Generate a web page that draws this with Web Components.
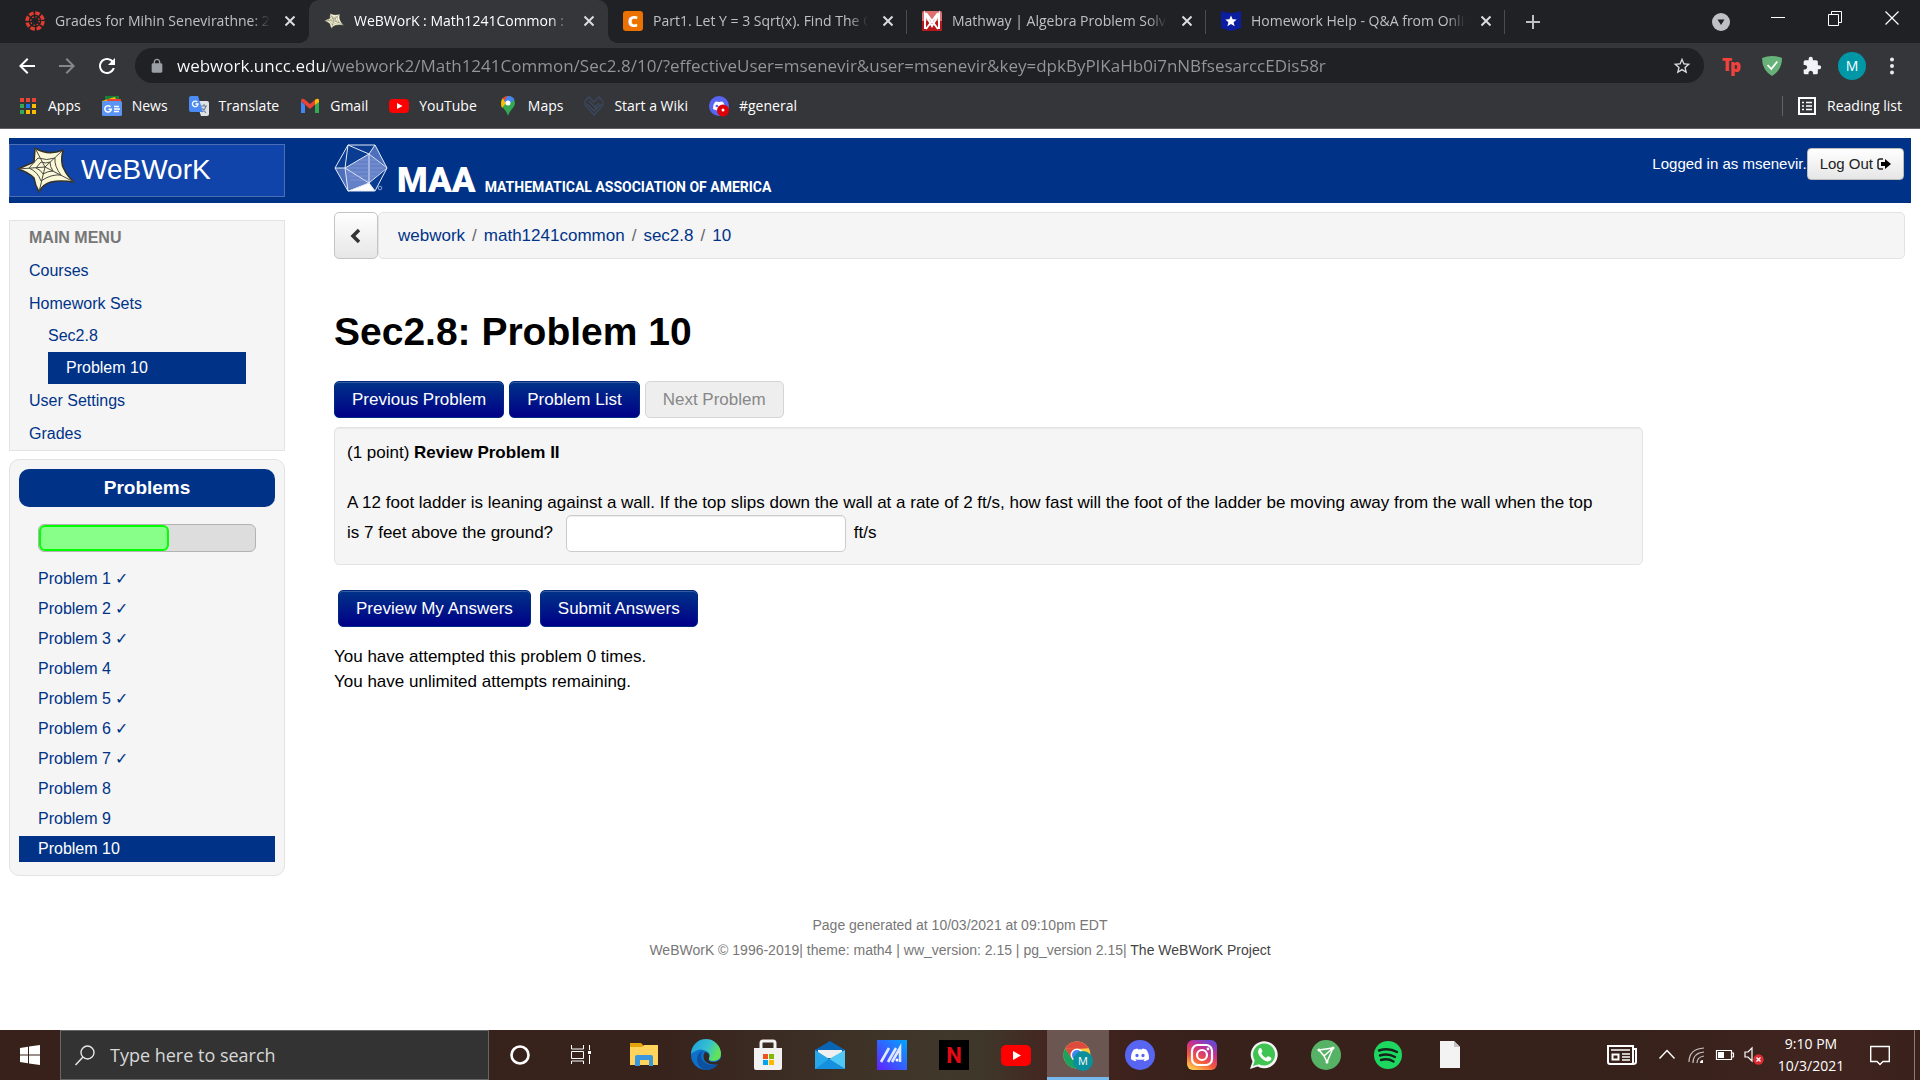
<!DOCTYPE html>
<html lang="en">
<head>
<meta charset="utf-8">
<title>WeBWorK : Math1241Common : Sec2.8 : 10</title>
<style>
    html, body { height: 100%; margin: 0; }
    body {
        --ui-font: "Open Sans", "Noto Sans", sans-serif;
        --blue: #003388;
        --well: #f5f5f5;
        --well-border: #e3e3e3;
        font-family: "Liberation Sans", Arial, sans-serif;
        font-size: 17px;
        line-height: 25px;
        color: #000;
        background: #fff;
    }
</style>
</head>
<body>
<desktop-screen>
    <browser-tabs slot="browser">
        <browser-tab icon="canvas">Grades for Mihin Senevirathne: 2021</browser-tab>
        <browser-tab icon="web" active>WeBWorK : Math1241Common : Sec2.8</browser-tab>
        <browser-tab icon="chegg">Part1. Let Y = 3 Sqrt(x). Find The Change</browser-tab>
        <browser-tab icon="mathway">Mathway | Algebra Problem Solver</browser-tab>
        <browser-tab icon="coursehero">Homework Help - Q&amp;A from Online</browser-tab>
    </browser-tabs>
    <browser-toolbar slot="browser"></browser-toolbar>
    <bookmark-bar slot="browser">
        <bookmark-link icon="apps">Apps</bookmark-link>
        <bookmark-link icon="news">News</bookmark-link>
        <bookmark-link icon="translate">Translate</bookmark-link>
        <bookmark-link icon="gmail">Gmail</bookmark-link>
        <bookmark-link icon="youtube">YouTube</bookmark-link>
        <bookmark-link icon="maps">Maps</bookmark-link>
        <bookmark-link icon="wiki">Start a Wiki</bookmark-link>
        <bookmark-link icon="discordbadge">#general</bookmark-link>
        <bookmark-link slot="end" icon="reading">Reading list</bookmark-link>
    </bookmark-bar>

    <ww-page>
        <ww-masthead slot="masthead" user="msenevir"></ww-masthead>
        <site-menu slot="side"></site-menu>
        <problem-list slot="side" count="10" current="10" solved="1,2,3,5,6,7" progress="60"></problem-list>
        <bread-crumbs path="webwork,math1241common,sec2.8,10"></bread-crumbs>
        <problem-view heading="Sec2.8: Problem 10">
            <span slot="title">(1 point) <b>Review Problem II</b></span>
            <span slot="question">A 12 foot ladder is leaning against a wall. If the top slips down the wall at a rate of 2 ft/s, how fast will the foot of the ladder be moving away from the wall when the top<br>is 7 feet above the ground?</span>
            <span slot="unit">ft/s</span>
        </problem-view>
        <ww-footer slot="footer"></ww-footer>
    </ww-page>

    <task-bar slot="taskbar"></task-bar>
</desktop-screen>

<script>
const icons = {
    // tab favicons
    canvas: ["0 0 20 20", `<g fill="none" stroke="#e23b30"><circle cx="10" cy="10" r="8" stroke-width="3.4" stroke-dasharray="4.6 1.68"/><circle cx="10" cy="10" r="4.2" stroke-width="1.4" stroke-dasharray="1.4 1.9"/></g>`],
    web: ["0 0 56 46", `<path d="M0 22 16 15 17 1Q30 9 45 3 42 16 46 22 49 29 56 35 42 33 33 35 25 37 21 45 17 38 16 31 10 25 0 22Z" fill="#fbf8d8" stroke="#33332c" stroke-width="1.6" stroke-linejoin="round"/><g fill="none" stroke="#4a4a42" stroke-width="1"><path d="M27 20 0 22M27 20 17 1M27 20 45 3M27 20 56 35M27 20 21 45"/><path d="M11 21 20 11Q29 14 37 11 36 19 43 28 33 27 23 34 20 25 11 21Z"/><path d="M18 21 23 15Q28 17 32 15 32 20 35 24 30 24 25 27 23 23 18 21Z"/></g>`],
    chegg: ["0 0 20 20", `<rect width="20" height="20" rx="3" fill="#eb7100"/><text x="10" y="16" text-anchor="middle" font-family="Open Sans" font-weight="800" font-size="16" fill="#fff">C</text>`],
    mathway: ["0 0 20 20", `<rect width="20" height="20" rx="2" fill="#e0706e"/><path d="M0 10h20v8q0 2-2 2H2q-2 0-2-2z" fill="#b81619"/><path d="M3 18V3l7 12 7-12v15M4 18 16 2M4 2l12 16" fill="none" stroke="#fff" stroke-width="2"/>`],
    coursehero: ["0 0 20 20", `<path d="M0 0q5 2 10 2t10-2v17l-10 3-10-3z" fill="#0b1ea0"/><path d="m10 4.5 1.6 3.8 4.1.3-3.1 2.7 1 4L10 13.100l-3.600 2.200 1-4-3.100-2.700 4.100-.3z" fill="#fff"/>`],
    // browser controls
    close: ["0 0 20 20", `<path d="m5.500 5.500 9 9m0-9-9 9" stroke="currentColor" stroke-width="2" fill="none"/>`],
    plus: ["0 0 20 20", `<path d="M10 3v14M3 10h14" stroke="currentColor" stroke-width="2"/>`],
    tabsearch: ["0 0 20 20", `<circle cx="10" cy="10" r="9" fill="#bdc1c6"/><path d="m6.500 7.500h7L10 13z" fill="#202124"/>`],
    minimise: ["0 0 20 20", `<path d="M3 8.500h14" stroke="#fff"/>`],
    restore: ["0 0 20 20", `<path d="M3.500 5.500h10v11h-10zM6.500 5V2.500h10v11H14" fill="none" stroke="#fff"/>`],
    winclose: ["0 0 20 20", `<path d="m3.500 2.500 13 13m0-13-13 13" stroke="#fff" stroke-width="1.200"/>`],
    back: ["0 0 24 24", `<path fill="#fff" d="M20 11H7.830l5.590-5.590L12 4l-8 8 8 8 1.410-1.410L7.830 13H20v-2z"/>`],
    forward: ["0 0 24 24", `<path fill="#85878a" d="M12 4l-1.410 1.410L16.170 11H4v2h12.170l-5.580 5.590L12 20l8-8z"/>`],
    reload: ["0 0 24 24", `<path fill="#fff" d="M17.650 6.350C16.200 4.900 14.210 4 12 4c-4.420 0-7.990 3.580-7.990 8s3.570 8 7.990 8c3.730 0 6.840-2.550 7.730-6h-2.080c-.82 2.330-3.040 4-5.650 4-3.310 0-6-2.690-6-6s2.690-6 6-6c1.660 0 3.140.69 4.220 1.780L13 11h7V4l-2.350 2.350z"/>`],
    lock: ["0 0 24 24", `<path fill="#9aa0a6" d="M18 8h-1V6c0-2.760-2.240-5-5-5S7 3.240 7 6v2H6c-1.100 0-2 .9-2 2v10c0 1.100.9 2 2 2h12c1.100 0 2-.9 2-2V10c0-1.100-.9-2-2-2zM9 8V6c0-1.660 1.340-3 3-3s3 1.340 3 3v2H9z"/>`],
    star: ["0 0 24 24", `<path fill="#dadce0" d="M22 9.240l-7.190-.62L12 2 9.190 8.630 2 9.240l5.460 4.730L5.820 21 12 17.270 18.180 21l-1.630-7.030L22 9.240zM12 15.400l-3.760 2.270 1-4.280-3.320-2.880 4.380-.38L12 6.100l1.710 4.040 4.380.38-3.320 2.880 1 4.280L12 15.400z"/>`],
    tp: ["0 0 20 20", `<text x="0" y="15" font-family="Open Sans" font-weight="800" font-size="17" fill="#f2423c">T</text><text x="8" y="16" font-family="Open Sans" font-weight="800" font-size="17" fill="#f2423c">p</text>`],
    shield: ["0 0 20 20", `<path d="M10 0q5 0 10 2 0 12-10 18Q0 14 0 2 5 0 10 0Z" fill="#67b279"/><path d="m5.500 9 3.800 4 6-7.500" fill="none" stroke="#fff" stroke-width="1.800"/>`],
    extension: ["0 0 24 24", `<path fill="#f1f3f4" d="M20.500 11H19V7c0-1.100-.9-2-2-2h-4V3.500C13 2.120 11.880 1 10.500 1S8 2.120 8 3.500V5H4c-1.100 0-1.990.9-1.990 2v3.800H3.500c1.490 0 2.700 1.210 2.700 2.700s-1.210 2.700-2.700 2.700H2V20c0 1.100.9 2 2 2h3.800v-1.500c0-1.490 1.210-2.700 2.700-2.700 1.490 0 2.700 1.210 2.700 2.700V22H17c1.100 0 2-.9 2-2v-4h1.500c1.380 0 2.500-1.120 2.500-2.500S21.880 11 20.500 11z"/>`],
    dots: ["0 0 20 20", `<g fill="#e8eaed"><circle cx="10" cy="3.500" r="2"/><circle cx="10" cy="10" r="2"/><circle cx="10" cy="16.500" r="2"/></g>`],
    // bookmarks
    apps: ["0 0 20 20", `<path fill="#ea4335" d="M2 2h4v4H2zM8 2h4v4H8zM14 2h4v4h-4z"/><path fill="#34a853" d="M2 8h4v4H2zM2 14h4v4H2z"/><path fill="#1a73e8" d="M8 8h4v4H8z"/><path fill="#fbbc04" d="M14 8h4v4h-4zM8 14h4v4H8zM14 14h4v4h-4z"/>`],
    news: ["0 0 20 20", `<path d="M3 0h14v8H3z" fill="#188038"/><path d="m0 5 13-4 3 8H1z" fill="#fbbc04"/><path d="m5 3 14 0v6H5z" fill="#ea4335"/><rect y="5" width="20" height="15" rx="1.500" fill="#5b94f3"/><path d="M8.500 10.800A3.200 3.200 0 1 0 9.200 13.300H6.500M12 10.500h5M12 13h6M12 15.500h5" fill="none" stroke="#fff" stroke-width="1.500"/>`],
    translate: ["0 0 20 20", `<path d="M7 5h11q2 0 2 2v11q0 2-2 2h-6z" fill="#dfe3e8"/><path d="M12 10h6M15 8v2M17 10q-1 4-4 6M13 12l4 5" stroke="#6f7f8c" stroke-width="1.100" fill="none"/><path d="M2 0h7l5 16H2q-2 0-2-2V2Q0 0 2 0Z" fill="#4c8bf5"/><path d="M8.300 6A2.800 2.800 0 1 0 9 8H6.500" fill="none" stroke="#fff" stroke-width="1.300"/>`],
    gmail: ["0 0 20 20", `<path d="M1 5v12h4V9z" fill="#4285f4"/><path d="M19 5v12h-4V9z" fill="#34a853"/><path d="M1 5q0-3 3-2l6 5 6-5q3-1 3 2l-9 8z" fill="#ea4335"/><path d="M15 9V4q4-3 4 1v1z" fill="#fbbc04"/>`],
    youtube: ["0 0 20 20", `<rect y="3" width="20" height="14" rx="4" fill="#f00"/><path d="m8 7 5.500 3L8 13z" fill="#fff"/>`],
    maps: ["0 0 20 20", `<path d="M10 0a7 7 0 0 0-7 7q0 3 3 6 3 3 4 7 1-4 4-7 3-3 3-6a7 7 0 0 0-7-7" fill="#34a853"/><path d="M3 7a7 7 0 0 1 2-5l4 4-5 6Q3 10 3 7" fill="#fbbc04"/><path d="M4.500 2.500A7 7 0 0 1 10 0l-1 7z" fill="#ea4335"/><path d="M10 0q5 0 6.500 4L10 8 6 5z" fill="#4285f4"/><circle cx="10" cy="7" r="2.500" fill="#fff"/>`],
    wiki: ["0 0 20 20", `<path d="M10 19 1 9V5l4-4 5 5 5-5 4 4v4zM5 5l7 7M10 12l5-5M3 8l7 7 7-7" fill="none" stroke="#3b4860" stroke-width="1.300"/>`],
    discordbadge: ["0 0 20 20", `<circle cx="10" cy="10" r="10" fill="#5865f2"/><path d="M4 13q0-6 3-7.500 3 .8 6 0 3 1.500 3 7.500-6 3-12 0" fill="#fff"/><circle cx="7.800" cy="10" r="1.300" fill="#5865f2"/><circle cx="14" cy="14.500" r="6" fill="#dd0008"/><circle cx="14" cy="14" r="1.500" fill="#fff"/>`],
    reading: ["0 0 20 20", `<path d="M2 2h16v16H2z" fill="none" stroke="#fff" stroke-width="2"/><path d="M5 6.500h2m2 0h6M5 10h2m2 0h6M5 13.500h2m2 0h6" stroke="#fff" stroke-width="1.500"/>`],
    // page
    chevron: ["0 0 20 20", `<path d="m13 4-6 6 6 6" fill="none" stroke="#333" stroke-width="3.500"/>`],
    logout: ["0 0 14 14", `<path d="M6 2H3Q1 2 1 4v6q0 2 2 2h3" fill="none" stroke="#222" stroke-width="1.500"/><path d="M4 5h4V2l6 5-6 5V9H4z" fill="#000"/>`],
    solid: ["0 0 54 48", `<path d="m14 1 27 0 12 23-12 23H14L1 24z" fill="#0a3c91"/><path d="M11 24 35 10l17 14-17 15L14 46 1 24z" fill="#6581c8"/><path d="m35 10 6-9 12 23zM11 24 14 46 1 24z" fill="#4e6fbb"/><path d="m35 39 6 8H14z" fill="#fff"/><path d="m14 1 27 0 12 23-12 23H14L1 24zM14 1l21 9 6-9M14 1 11 24 1 24M11 24 35 10l18 14M11 24l3 23 21-8 18-15M11 24l24 15 6 8M35 10v29" fill="none" stroke="#e4eaf7" stroke-width="1"/><path d="M13 24h36M14 28h32M15 32h26M16 36h18M18 20h28M26 16h16" stroke="#8ba2da" stroke-width=".6"/><circle cx="46" cy="44" r="1.800" fill="none" stroke="#8ba2da"/>`],
    // taskbar
    windows: ["0 0 20 20", `<path fill="#fff" d="m0 3 8-1.200V9.500H0zM9 1.600 20 0v9.500H9zM0 10.500h8v7.700L0 17zM9 10.500h11V20L9 18.400z"/>`],
    search: ["0 0 20 20", `<circle cx="12.500" cy="7.500" r="6.500" fill="none" stroke="#e8e8e8" stroke-width="1.400"/><path d="m8 12-7.500 8" stroke="#e8e8e8" stroke-width="1.500"/>`],
    cortana: ["0 0 30 30", `<circle cx="15" cy="15" r="8.500" fill="none" stroke="#fff" stroke-width="2.600"/>`],
    taskview: ["0 0 30 30", `<path d="M4.500 5v4h12V5M4.500 24v-3h12v3M4.500 11.500h12v7h-12zM22.500 5v5M22.500 15v9" fill="none" stroke="#fff"/><path d="M21 11h3v3h-3z" fill="#fff"/>`],
    folder: ["0 0 30 30", `<path d="M1 3h11l2 2v3H1z" fill="#e6a30c"/><path d="M1 7h12l2-2h14v20H1z" fill="#ffd35c"/><path d="M6 26V17q0-2 2-2h14q2 0 2 2v9h-4v-6h-9v6z" fill="#3a96dd"/>`],
    edge: ["0 0 30 30", `<defs><linearGradient id="e" x2="1" y2=".4"><stop stop-color="#1b9de2"/><stop offset=".6" stop-color="#35c1d0"/><stop offset="1" stop-color="#62e35a"/></linearGradient></defs><circle cx="15" cy="15" r="15" fill="#0f70c9"/><path d="M0 14A15 15 0 0 1 30 14q0 7-8 7-5 0-4-3 2-3-1-6Q9 6 0 14" fill="url(#e)"/><path d="M27 24q-9 3-15-3-4-5 0-10-6 2-6 9 1 8 9 10 8 0 12-6" fill="#0d50a0"/><path d="M18 18q-2 4 5 4 4 0 7-4l-2 6q-9 2-14-3-3-5 0-9 5 1 4 6" fill="#352721"/>`],
    store: ["0 0 30 30", `<path d="M8 9V3q0-2 2-2h10q2 0 2 2v6" fill="none" stroke="#f2f2f2" stroke-width="3"/><path d="M1 8h28v20q0 2-2 2H3q-2 0-2-2z" fill="#f1f1f1"/><path d="M10 14h5v5h-5z" fill="#f25022"/><path d="M16 14h5v5h-5z" fill="#7fba00"/><path d="M10 20h5v5h-5z" fill="#00a4ef"/><path d="M16 20h5v5h-5z" fill="#ffb900"/>`],
    mail: ["0 0 30 30", `<path d="m15 1 15 9v8H0v-8z" fill="#0a64b4"/><path d="M3 10h24v8H3z" fill="#f0f0f0"/><path d="m0 10 30 19H0z" fill="#28a8ea"/><path d="m30 10-16 9 16 10z" fill="#50c8f5"/><path d="m0 29 14-10 16 10z" fill="#1490df"/>`],
    maker: ["0 0 30 30", `<defs><linearGradient id="m" x1="1" x2="0" y2="1"><stop stop-color="#00a6ff"/><stop offset="1" stop-color="#6420ff"/></linearGradient></defs><path d="M0 0h30v30H0z" fill="url(#m)"/><path d="m4 22 8-14M11 22l8-14M15 22l8-14v14" stroke="#dfe8ff" stroke-width="2.600" fill="none"/><circle cx="20" cy="20" r="1.500" fill="#fff"/>`],
    netflix: ["0 0 30 30", `<path d="M0 0h30v30H0z"/><text x="15" y="23" text-anchor="middle" font-family="Roboto" font-weight="700" font-size="22" fill="#e50914">N</text>`],
    youtubebig: ["0 0 30 30", `<rect y="5" width="30" height="21" rx="5" fill="#f00"/><path d="m12 11 8 4.500-8 4.500z" fill="#fff"/>`],
    chrome: ["0 0 30 30", `<circle cx="14" cy="15" r="13.500" fill="#ffcd40"/><path d="M2.300 8.200A13.500 13.500 0 0 1 25.700 8.200L14 9z" fill="#dd4b3e"/><path d="M2.300 8.200A13.500 13.500 0 0 0 14 28.500L19 19 8 17z" fill="#1aa260"/><path d="M2.300 8.200 8 18l6-9.500z" fill="#dd4b3e"/><circle cx="14" cy="15" r="6.500" fill="#fff"/><circle cx="14" cy="15" r="5" fill="#4285f4"/><circle cx="20" cy="21" r="10" fill="#0a8f9c"/><text x="20" y="25" text-anchor="middle" font-family="Open Sans" font-size="11" fill="#fff">M</text>`],
    discord: ["0 0 30 30", `<circle cx="15" cy="15" r="15" fill="#5865f2"/><path transform="translate(6 6.500) scale(.75 .7)" fill="#fff" d="M20.317 4.370a19.800 19.800 0 0 0-4.885-1.515.074.074 0 0 0-.079.037c-.211.375-.445.865-.608 1.250a18.300 18.300 0 0 0-5.487 0c-.164-.393-.406-.874-.618-1.250a.077.077 0 0 0-.079-.037A19.700 19.700 0 0 0 3.677 4.370C.533 9.046-.319 13.580.099 18.058c2.053 1.508 4.041 2.423 6.024 3.085.54-.63.95-1.295 1.310-2.022-.69-.353-1.310-.655-1.914-1.020l.45-.42c3.928 1.793 8.180 1.793 12.061 0l.45.42c-.6.340-1.220.65-1.914.998.36.720.77 1.390 1.310 2.022 1.990-.585 3.980-1.500 6.034-3.063.5-5.177-.838-9.674-3.549-13.660zM8.020 15.331c-1.183 0-2.157-1.086-2.157-2.419s.956-2.419 2.157-2.419 2.176 1.095 2.157 2.419c0 1.333-.956 2.419-2.157 2.419zm7.975 0c-1.183 0-2.157-1.086-2.157-2.419s.955-2.419 2.157-2.419 2.176 1.095 2.157 2.419c0 1.333-.946 2.419-2.157 2.419z"/>`],
    instagram: ["0 0 30 30", `<defs><linearGradient id="i" x1=".2" y1="1" x2=".7" y2="0"><stop stop-color="#ffcf50"/><stop offset=".35" stop-color="#f4573c"/><stop offset=".7" stop-color="#c52f92"/><stop offset="1" stop-color="#6a48d0"/></linearGradient></defs><rect width="30" height="30" rx="6" fill="url(#i)"/><g fill="none" stroke="#fff" stroke-width="2.200"><rect x="5" y="5" width="20" height="20" rx="6"/><circle cx="15" cy="15" r="5"/></g><circle cx="21" cy="9" r="1.400" fill="#fff"/>`],
    whatsapp: ["0 0 30 30", `<path d="m1 29 2.500-7.500A13.500 13.500 0 1 1 8.500 26.500z" fill="#f4f4f4"/><path d="m4 26 1.800-5.500A11 11 0 1 1 10 24.300z" fill="#3fc351"/><path d="M10 8.500q2-1.500 3 1.500 1 2-.8 3 1.500 3.500 4.800 5 1.500-2.500 3-1.500 3.500 1.500 2 3.500-3 3-8-.500Q7 14 10 8.500" fill="#fff"/>`],
    vpn: ["0 0 30 30", `<circle cx="15" cy="15" r="15" fill="#56b366"/><path d="m8 10 14-2-6 14-3-6zM13 16l9-8" fill="none" stroke="#fff" stroke-width="1.500"/><g fill="#fff"><circle cx="8" cy="10" r="1.500"/><circle cx="22" cy="8" r="1.500"/><circle cx="16" cy="22" r="1.500"/></g>`],
    spotify: ["0 0 30 30", `<circle cx="15" cy="15" r="14" fill="#1ed760"/><path d="M6 10.500q10-3 18 1.500M7 15.500q8-2.500 15 1.500M8 20q7-2 12.500 1.500" fill="none" stroke="#15241a" stroke-width="2.400" stroke-linecap="round"/>`],
    file: ["0 0 30 30", `<path d="M5 1h14l6 6v21H5z" fill="#f3f3f3"/><path d="M19 1v6h6z" fill="#c4c4c4"/>`],
    newspaper: ["0 0 30 30", `<path d="M1 6h25v18H3q-2 0-2-2zM26 9h3v13q0 2-3 2" fill="none" stroke="#fff" stroke-width="2"/><path d="M4 10h19M15 14h8M15 17h8M15 20h8" stroke="#fff" stroke-width="1.500"/><path d="M5.500 14.500h6v5h-6z" fill="none" stroke="#fff" stroke-width="2"/>`],
    caret: ["0 0 20 20", `<path d="m2.500 13.500 7.500-8 7.500 8" fill="none" stroke="#fff" stroke-width="1.400"/>`],
    wifi: ["0 0 20 20", `<g fill="none" stroke="#c9c2c0" stroke-width="1.200"><path d="M3 17Q3 4 18 3"/><path d="M7 18Q7 8 18 7"/><path d="M11 18q0-6 7-7"/></g><path d="M14 18q0-3 3-3v3z" fill="#fff"/>`],
    battery: ["0 0 20 20", `<path d="M1.500 5.500h15v9h-15zM17 8h1.500v4H17" fill="none" stroke="#fff" stroke-width="1.200"/><path d="M3 7h6v6H3z" fill="#fff"/>`],
    mute: ["0 0 20 20", `<path d="M1 7h3l4-4v13l-4-4H1z" fill="none" stroke="#fff" stroke-width="1.200"/><circle cx="14.500" cy="14.500" r="5.200" fill="#dc2b32"/><path d="m12.500 12.500 4 4m0-4-4 4" stroke="#fff" stroke-width="1.300"/>`],
    notify: ["0 0 20 20", `<path d="M.7 1.500h18.600v15H13L10 19.500 7 16.500H.7z" fill="none" stroke="#fff" stroke-width="1.400"/>`]
};

class BaseElement extends HTMLElement {
    connectedCallback() {
        if (this.shadowRoot) return;
        this.attachShadow({ mode: "open" });
        this.shadowRoot.innerHTML = `<style>*{box-sizing:border-box}button,input{font:inherit;margin:0}${this.styles()}</style>${this.markup()}`;
    }
    styles() { return ":host{display:block}"; }
    markup() { return "<slot></slot>"; }
}

class UiIcon extends BaseElement {
    styles() {
        const size = this.getAttribute("size") || "20";
        const height = this.getAttribute("height") || size;
        return `:host { display: block; flex: none; width: ${size}px; height: ${height}px; }
            svg { display: block; width: 100%; height: 100%; overflow: visible; }`;
    }
    markup() {
        const [box, body] = icons[this.getAttribute("name")];
        return `<svg viewBox="${box}" aria-hidden="true">${body}</svg>`;
    }
}

class DesktopScreen extends BaseElement {
    styles() {
        return `:host { display: flex; flex-direction: column; min-height: 100vh; }
            .browser { background: #35363a; border-bottom: 1px solid #5f6368; }
            main { flex: 1; }`;
    }
    markup() {
        return `<div class="browser"><slot name="browser"></slot></div>
            <main><slot></slot></main><slot name="taskbar"></slot>`;
    }
}

class BrowserTabs extends BaseElement {
    styles() {
        return `:host { display: flex; height: 43px; padding-left: 10px; background: #202124; color: #bdc1c6; }
            button { display: flex; align-items: center; justify-content: center; padding: 0; border: 0; background: none; color: inherit; }
            .new { width: 55px; }
            .search { width: 57px; margin-left: auto; }
            .window { width: 57px; height: 38px; }`;
    }
    markup() {
        return `<slot></slot>
            <button class="new" aria-label="New tab"><ui-icon name="plus"></ui-icon></button>
            <button class="search" aria-label="Search tabs"><ui-icon name="tabsearch"></ui-icon></button>
            <button class="window" aria-label="Minimize"><ui-icon name="minimise"></ui-icon></button>
            <button class="window" aria-label="Restore"><ui-icon name="restore"></ui-icon></button>
            <button class="window" aria-label="Close"><ui-icon name="winclose"></ui-icon></button>`;
    }
}

class BrowserTab extends BaseElement {
    styles() {
        return `:host { display: flex; align-items: center; gap: 10px; flex: 0 1 299px; min-width: 0; padding: 0 9px 2px 15px; box-sizing: border-box;
                font: 14px/20px var(--ui-font); color: #bdc1c6; position: relative; }
            :host::after { content: ""; position: absolute; right: 0; top: 10px; width: 1px; height: 24px; background: #4a4c50; }
            :host(:first-child)::after, :host([active])::after { display: none; }
            :host([active]) { background: #35363a; color: #fff; border-radius: 10px 10px 0 0; }
            /* flared feet of the active tab */
            :host([active])::before { content: ""; position: absolute; left: -10px; right: -10px; bottom: 0; height: 10px;
                background: radial-gradient(circle at 0 0, transparent 10px, #35363a 10px) left / 10px 10px no-repeat,
                    radial-gradient(circle at 100% 0, transparent 10px, #35363a 10px) right / 10px 10px no-repeat; }
            .title { flex: 1; overflow: hidden; white-space: nowrap; -webkit-mask: linear-gradient(90deg, #000 91%, transparent); mask: linear-gradient(90deg, #000 91%, transparent); }
            button { padding: 0; border: 0; background: none; color: #dadce0; }`;
    }
    markup() {
        return `<ui-icon name="${this.getAttribute("icon")}"></ui-icon><span class="title"><slot></slot></span>
            <button aria-label="Close tab"><ui-icon name="close"></ui-icon></button>`;
    }
}

class BrowserToolbar extends BaseElement {
    styles() {
        return `:host { display: flex; align-items: center; height: 45px; padding: 0 8px 0 7px; }
            button { display: flex; align-items: center; justify-content: center; width: 40px; height: 40px; padding: 0; border: 0; background: none; }
            .omnibox { flex: 1; display: flex; align-items: center; gap: 12px; height: 35px; margin: 0 8px; padding: 0 2px 0 14px; border-radius: 18px; background: #202124; }
            input { flex: 1; min-width: 0; padding: 0; border: 0; outline: 0; font: 17px/24px var(--ui-font); color: transparent;
                background: linear-gradient(90deg, #fff 150px, #93979c 150px); -webkit-background-clip: text; background-clip: text; }
            .avatar { width: 28px; height: 28px; margin: 0 6px; border-radius: 50%; background: #0097a7; color: #fff; font: 14px/28px var(--ui-font); }`;
    }
    markup() {
        return `<button aria-label="Back"><ui-icon name="back" size="24"></ui-icon></button>
            <button aria-label="Forward"><ui-icon name="forward" size="24"></ui-icon></button>
            <button aria-label="Reload"><ui-icon name="reload" size="24"></ui-icon></button>
            <div class="omnibox"><ui-icon name="lock" size="16"></ui-icon>
                <input aria-label="Address" value="webwork.uncc.edu/webwork2/Math1241Common/Sec2.8/10/?effectiveUser=msenevir&amp;user=msenevir&amp;key=dpkByPIKaHb0i7nNBfsesarccEDis58r">
                <button aria-label="Bookmark this page"><ui-icon name="star"></ui-icon></button></div>
            <button aria-label="Tp"><ui-icon name="tp"></ui-icon></button>
            <button aria-label="Shield"><ui-icon name="shield"></ui-icon></button>
            <button aria-label="Extensions"><ui-icon name="extension"></ui-icon></button>
            <button class="avatar">M</button>
            <button aria-label="Menu"><ui-icon name="dots"></ui-icon></button>`;
    }
}

class BookmarkBar extends BaseElement {
    styles() {
        return `:host { display: flex; align-items: center; gap: 21px; height: 40px; padding: 0 18px; box-sizing: border-box; margin-top: -2px; margin-bottom: 2px; }
            .end { margin-left: auto; padding-left: 14px; border-left: 1px solid #5f6368; }`;
    }
    markup() { return `<slot></slot><div class="end"><slot name="end"></slot></div>`; }
}

class BookmarkLink extends BaseElement {
    styles() {
        return `a { display: flex; align-items: center; gap: 10px; font: 14px/20px var(--ui-font); color: #fff; text-decoration: none; white-space: nowrap; }`;
    }
    markup() { return `<a href="#"><ui-icon name="${this.getAttribute("icon")}"></ui-icon><slot></slot></a>`; }
}

class WwPage extends BaseElement {
    styles() {
        return `:host { display: block; padding: 9px; }
            .columns { display: grid; grid-template-columns: 276px 1fr; column-gap: 49px; }
            .side { display: flex; flex-direction: column; gap: 8px; padding-top: 17px; }
            .content { padding: 9px 6px 0 0; }`;
    }
    markup() {
        return `<slot name="masthead"></slot>
            <div class="columns"><div class="side"><slot name="side"></slot></div>
            <div class="content"><slot></slot></div></div><slot name="footer"></slot>`;
    }
}

class WwMasthead extends BaseElement {
    styles() {
        return `:host { display: grid; grid-template-columns: 276px 1fr auto; column-gap: 49px; height: 65px; padding: 6px 7px 6px 0; box-sizing: border-box; background: var(--blue); color: #fff; }
            .brand { display: flex; align-items: center; gap: 7px; padding: 0 8px 2px; border: 1px solid #4c6fb3; background: #1144aa; color: #fff; font-size: 28px; line-height: 40px; text-decoration: none; }
            .maa { display: flex; align-items: baseline; gap: 9px; height: 48px; color: #fff; font-family: Roboto, "Liberation Sans", sans-serif; font-weight: bold; text-decoration: none; white-space: nowrap; }
            .maa b { font-size: 35px; line-height: 36px; }
            .maa span { font-size: 14px; line-height: 16px; }
            .user { display: flex; align-items: flex-start; padding-top: 4px; font-size: 15px; line-height: 32px; }
            button { display: flex; align-items: center; gap: 4px; height: 32px; padding: 0 12px; border: 1px solid #bbb; border-radius: 4px; background: linear-gradient(#fff, #e6e6e6); color: #222; }`;
    }
    markup() {
        return `<a class="brand" href="#"><ui-icon name="web" size="56" height="46"></ui-icon>WeBWorK</a>
            <a class="maa" href="#"><ui-icon name="solid" size="54" height="48"></ui-icon><b>MAA</b><span>MATHEMATICAL ASSOCIATION OF AMERICA</span></a>
            <div class="user">Logged in as ${this.getAttribute("user")}.<button>Log Out<ui-icon name="logout" size="14"></ui-icon></button></div>`;
    }
}

class SiteMenu extends BaseElement {
    styles() {
        return `:host { display: block; border: 1px solid var(--well-border); background: var(--well); font-size: 16px; }
            h2 { margin: 0; padding: 0 19px; font-size: 16px; line-height: 33px; color: #777; }
            ul { margin: 0; padding: 0; list-style: none; }
            a { display: block; padding: 0 19px; line-height: 33px; color: var(--blue); text-decoration: none; }
            ul ul { margin: 0 38px; }
            ul ul a { padding: 0; line-height: 32px; }
            ul ul ul { margin: 0; }
            ul ul ul a { padding: 0 18px; background: var(--blue); color: #fff; }`;
    }
    markup() {
        return `<nav><h2>MAIN MENU</h2><ul>
            <li><a href="#">Courses</a></li>
            <li><a href="#">Homework Sets</a>
                <ul><li><a href="#">Sec2.8</a><ul><li><a href="#">Problem 10</a></li></ul></li></ul></li>
            <li><a href="#">User Settings</a></li>
            <li><a href="#">Grades</a></li></ul></nav>`;
    }
}

class ProblemList extends BaseElement {
    styles() {
        return `:host { display: block; padding: 9px 9px 13px; border: 1px solid var(--well-border); border-radius: 10px; background: var(--well); font-size: 16px; }
            h2 { margin: 0; border-radius: 10px; background: var(--blue); color: #fff; font-size: 19px; line-height: 38px; text-align: center; }
            .progress { height: 28px; margin: 17px 19px 14px; border: 1px solid #b3b3b3; border-radius: 6px; background: #ddd; }
            .bar { height: 100%; border: 2px solid #00ff00; border-radius: 6px; background: #88ff88; }
            ul { display: flex; flex-direction: column; gap: 4px; margin: 0; padding: 0; list-style: none; }
            a { display: block; height: 26px; padding: 0 19px; line-height: 26px; color: var(--blue); text-decoration: none; }
            a[aria-current] { background: var(--blue); color: #fff; }`;
    }
    markup() {
        const solved = this.getAttribute("solved").split(",").map(Number);
        const current = Number(this.getAttribute("current"));
        let rows = "";
        for (let i = 1; i <= Number(this.getAttribute("count")); i++) {
            rows += `<li><a href="#"${i === current ? ' aria-current="page"' : ""}>Problem ${i}${solved.includes(i) ? " ✓" : ""}</a></li>`;
        }
        return `<h2>Problems</h2>
            <div class="progress"><div class="bar" style="width:${this.getAttribute("progress")}%"></div></div><ul>${rows}</ul>`;
    }
}

class BreadCrumbs extends BaseElement {
    styles() {
        return `:host { display: flex; height: 47px; }
            button { display: flex; align-items: center; justify-content: center; width: 44px; padding: 0; border: 1px solid #c5c5c5; border-radius: 5px; background: linear-gradient(#fff, #e6e6e6); }
            ol { display: flex; flex: 1; align-items: center; margin: 0; padding: 0 19px; border: 1px solid var(--well-border); border-radius: 5px; background: var(--well); list-style: none; }
            li + li::before { content: "/"; padding: 0 7px; color: #666; }
            a { color: var(--blue); text-decoration: none; }`;
    }
    markup() {
        const items = this.getAttribute("path").split(",").map(p => `<li><a href="#">${p}</a></li>`).join("");
        return `<button aria-label="Up"><ui-icon name="chevron"></ui-icon></button><ol>${items}</ol>`;
    }
}

class WwButton extends BaseElement {
    styles() {
        return `:host { display: block; }
            button { height: 37px; padding: 0 17px; border: 1px solid #002a80; border-radius: 5px; background: linear-gradient(#003388, #000088); color: #fff; line-height: 35px; box-shadow: inset 0 1px 0 #ffffff33; }
            button:disabled { border-color: #d5d5d5; background: #eee; color: #888; box-shadow: none; }`;
    }
    markup() { return `<button${this.hasAttribute("disabled") ? " disabled" : ""}><slot></slot></button>`; }
}

class ProblemView extends BaseElement {
    styles() {
        return `:host { display: block; }
            h1 { margin: 49px 0 25px; font-size: 39px; line-height: 48px; }
            .buttons { display: flex; gap: 5px; }
            .well { width: calc(100% * 5 / 6); min-height: 138px; margin: 9px 0 25px; padding: 12px; border: 1px solid var(--well-border); border-radius: 5px; background: var(--well); box-shadow: inset 0 1px 1px #0000000d; }
            label { display: block; margin-top: 25px; }
            input { width: 280px; height: 37px; margin: 0 8px; padding: 4px 8px; border: 1px solid #ccc; border-radius: 5px; background: #fff; box-shadow: inset 0 1px 1px #00000013; vertical-align: middle; }
            .submit { gap: 9px; padding-left: 4px; }
            p { margin: 17px 0 0; }`;
    }
    markup() {
        return `<h1>${this.getAttribute("heading")}</h1>
            <div class="buttons"><ww-button>Previous Problem</ww-button><ww-button>Problem List</ww-button><ww-button disabled>Next Problem</ww-button></div>
            <div class="well"><slot name="title"></slot>
                <label><slot name="question"></slot> <input type="text"><slot name="unit"></slot></label></div>
            <div class="buttons submit"><ww-button>Preview My Answers</ww-button><ww-button>Submit Answers</ww-button></div>
            <p>You have attempted this problem 0 times.<br>You have unlimited attempts remaining.</p>`;
    }
}

class WwFooter extends BaseElement {
    styles() {
        return `:host { display: block; margin-top: 37px; color: #777; font-size: 14px; line-height: 25px; text-align: center; }
            a { color: #444; text-decoration: none; }`;
    }
    markup() {
        return `<div>Page generated at 10/03/2021 at 09:10pm EDT</div>
            <div>WeBWorK © 1996-2019| theme: math4 | ww_version: 2.15 | pg_version 2.15| <a href="#">The WeBWorK Project</a></div>`;
    }
}

class TaskBar extends BaseElement {
    styles() {
        return `:host { display: flex; align-items: stretch; height: 50px; font: 14px/22px var(--ui-font); color: #fff;
                background: linear-gradient(90deg, #38211b 0, #37221c 34%, #40372a 48%, #3f382a 51%, #43241f 55%, #38211b 62%, #37211b 85%, #40241f 95%, #3a211c); }
            button { display: flex; align-items: center; justify-content: center; padding: 0; border: 0; background: none; color: inherit; }
            .start { width: 60px; }
            .search { display: flex; align-items: center; gap: 15px; width: 429px; padding: 0 14px; border: 1px solid #666; background: #333; }
            input { flex: 1; min-width: 0; padding: 0; border: 0; outline: 0; background: none; font-size: 18px; line-height: 24px; color: #fff; }
            input::placeholder { color: #d8d8d8; opacity: 1; }
            .app { width: 62px; }
            .app.active { background: #6b5652; border-bottom: 3px solid #76b9ed; padding-top: 3px; }
            .tray { display: flex; margin-left: auto; }
            .news { width: 60px; }
            .small { width: 29px; }
            .clock { display: block; width: 86px; text-align: center; }
            .notify { width: 52px; }
            .edge { width: 6px; margin-left: 8px; border-left: 1px solid #8a7a76; }`;
    }
    markup() {
        const apps = { cortana: "Cortana", taskview: "Task View", folder: "File Explorer", edge: "Edge", store: "Store", mail: "Mail", maker: "Maker",
            netflix: "Netflix", youtubebig: "YouTube", chrome: "Chrome", discord: "Discord", instagram: "Instagram", whatsapp: "WhatsApp", vpn: "VPN", spotify: "Spotify", file: "File" };
        const buttons = Object.entries(apps).map(([icon, label]) =>
            `<button class="app${icon === "chrome" ? " active" : ""}" aria-label="${label}"><ui-icon name="${icon}" size="30"></ui-icon></button>`).join("");
        const tray = ["caret", "wifi", "battery", "mute"].map(icon => `<button class="small" aria-label="${icon}"><ui-icon name="${icon}"></ui-icon></button>`).join("");
        return `<button class="start" aria-label="Start"><ui-icon name="windows"></ui-icon></button>
            <div class="search"><ui-icon name="search"></ui-icon><input type="text" aria-label="Search" placeholder="Type here to search"></div>
            ${buttons}
            <div class="tray"><button class="news" aria-label="News"><ui-icon name="newspaper" size="30"></ui-icon></button>${tray}
                <button class="clock">9:10 PM<br>10/3/2021</button>
                <button class="notify" aria-label="Notifications"><ui-icon name="notify"></ui-icon></button><span class="edge"></span></div>`;
    }
}

customElements.define("ui-icon", UiIcon);
customElements.define("desktop-screen", DesktopScreen);
customElements.define("browser-tabs", BrowserTabs);
customElements.define("browser-tab", BrowserTab);
customElements.define("browser-toolbar", BrowserToolbar);
customElements.define("bookmark-bar", BookmarkBar);
customElements.define("bookmark-link", BookmarkLink);
customElements.define("ww-page", WwPage);
customElements.define("ww-masthead", WwMasthead);
customElements.define("site-menu", SiteMenu);
customElements.define("problem-list", ProblemList);
customElements.define("bread-crumbs", BreadCrumbs);
customElements.define("ww-button", WwButton);
customElements.define("problem-view", ProblemView);
customElements.define("ww-footer", WwFooter);
customElements.define("task-bar", TaskBar);
</script>
</body>
</html>
